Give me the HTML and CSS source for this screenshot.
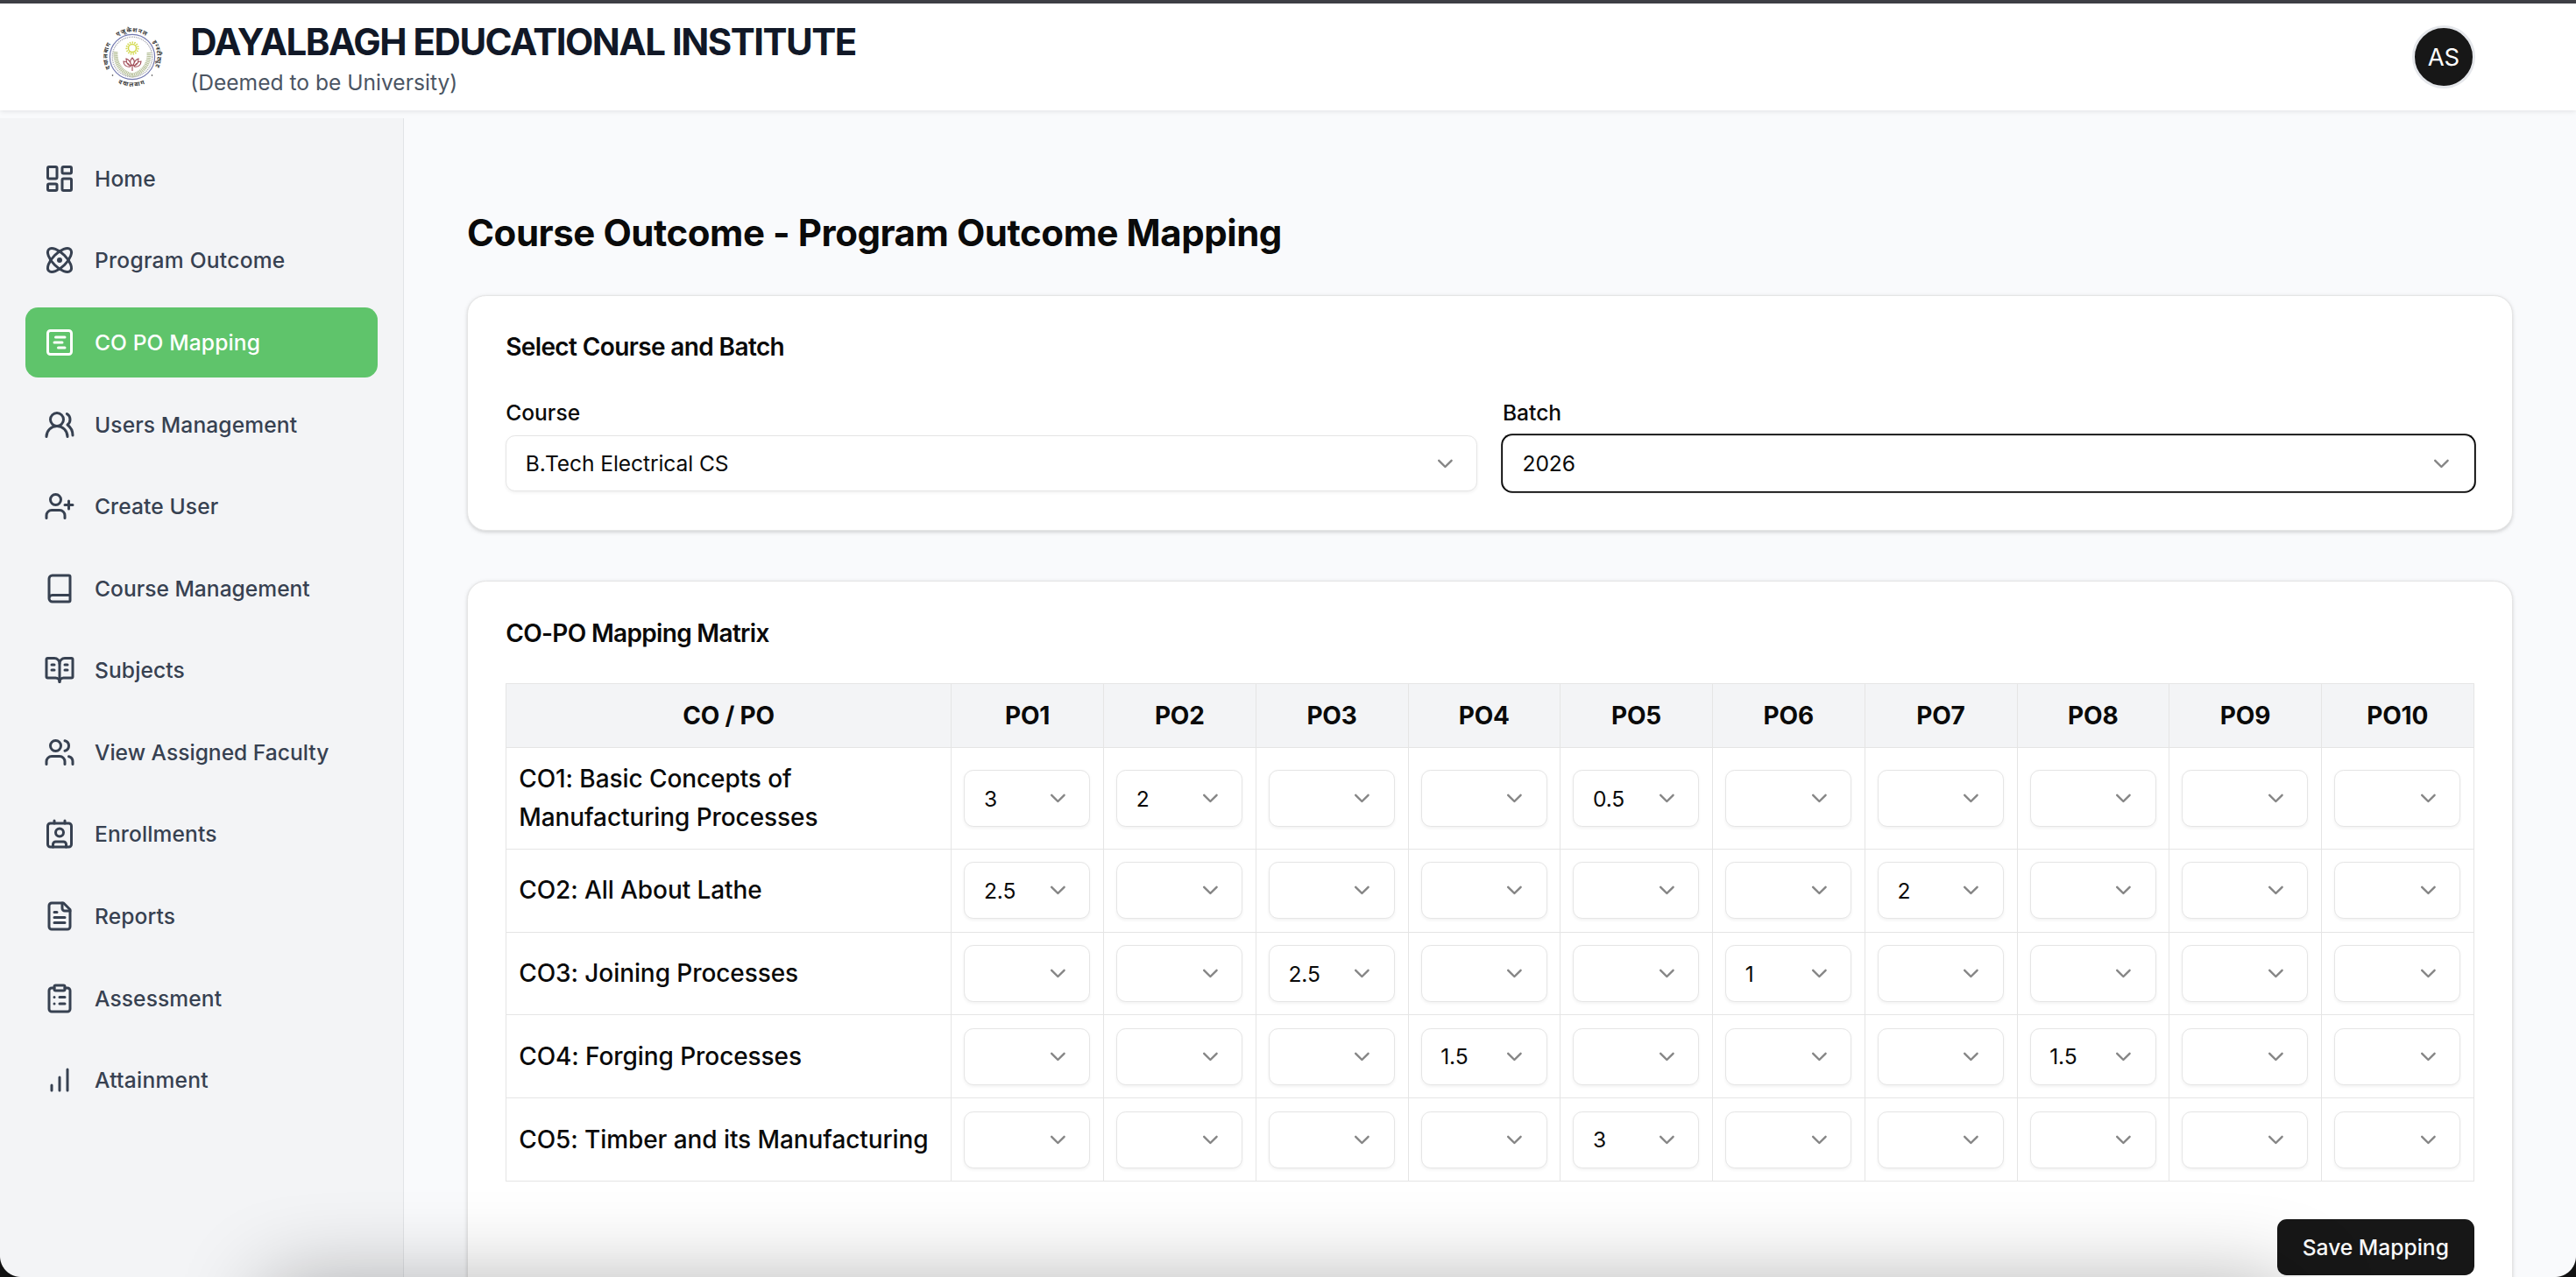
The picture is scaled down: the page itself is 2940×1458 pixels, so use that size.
FILE: index.html
```html
<!DOCTYPE html>
<html lang="en">
<head>
<meta charset="utf-8">
<title>CO PO Mapping</title>
<link rel="stylesheet" href="styles.css">
</head>
<body>
<header class="topbar">
  <div class="brand">
    <svg class="logo" viewBox="0 0 72 72">
      <defs>
        <path id="arc-top" d="M7.5 36a28.5 28.5 0 0 1 57 0a28.5 28.5 0 0 1-57 0"/>
        <path id="arc-left" d="M36 64.5a28.5 28.5 0 0 1 0-57a28.5 28.5 0 0 1 0 57"/>
        <path id="arc-bottom" d="M2.3 36a33.7 33.7 0 0 0 67.4 0"/>
      </defs>
      <circle cx="36" cy="36" r="25.6" fill="none" stroke="#7379b0" stroke-width="1.200"/>
      <circle cx="36" cy="36" r="22.800" fill="none" stroke="#a5a5b0" stroke-width="1.300" stroke-dasharray="1 .8" pathLength="120"/>
      <path d="M17 30c-1 13 6 24 19 27c13-3 20-14 19-27" fill="none" stroke="#b9c29d" stroke-width="5" stroke-dasharray="1.300 .7"/>
      <circle cx="36" cy="26" r="4.500" fill="#fff" stroke="#d2d84a" stroke-width="1.500"/>
      <circle cx="36" cy="26" r="6.600" fill="none" stroke="#d2d84a" stroke-width="2" stroke-dasharray="1.400 1.370"/>
      <path fill="none" stroke="#a04a55" stroke-width="1.100" d="M36 52v-7M36 46c-3-3-3-6 0-9c3 3 3 6 0 9M35 46c-5 0-6-4-6-8c3 1 5 4 6 8M37 46c5 0 6-4 6-8c-3 1-5 4-6 8M34 47c-5 1-8-2-8-6c3 0 6 3 8 6M38 47c5 1 8-2 8-6c-3 0-6 3-8 6"/>
      <circle cx="13.500" cy="57" r=".8" fill="#333"/>
      <circle cx="58.500" cy="57" r=".8" fill="#333"/>
      <g class="logo-text">
        <text><textPath href="#arc-top" startOffset="27">एजूकेशनल</textPath></text>
        <text><textPath href="#arc-top" startOffset="71">इन्स्टीट्यूट</textPath></text>
        <text><textPath href="#arc-left" startOffset="31">दयालबाग</textPath></text>
        <text class="logo-text-wide"><textPath href="#arc-bottom" startOffset="36">दयालबाग</textPath></text>
      </g>
    </svg>
    <div class="brand-text">
      <div class="brand-name">DAYALBAGH EDUCATIONAL INSTITUTE</div>
      <div class="brand-sub">(Deemed to be University)</div>
    </div>
  </div>
  <div class="avatar">AS</div>
</header>
<div class="layout">
  <nav class="sidebar">
    <a class="nav-item"><svg class="icon" viewBox="0 0 24 24"><rect width="7" height="9" x="3" y="3" rx="1"/><rect width="7" height="5" x="14" y="3" rx="1"/><rect width="7" height="9" x="14" y="12" rx="1"/><rect width="7" height="5" x="3" y="16" rx="1"/></svg><span>Home</span></a>
    <a class="nav-item"><svg class="icon" viewBox="0 0 24 24"><circle cx="12" cy="12" r="1"/><path d="M20.200 20.200c2.040-2.030.020-7.360-4.500-11.900-4.540-4.520-9.870-6.540-11.900-4.500-2.040 2.030-.020 7.360 4.500 11.900 4.540 4.520 9.870 6.540 11.900 4.500Z"/><path d="M15.700 15.700c4.520-4.540 6.540-9.870 4.500-11.900-2.030-2.040-7.360-.020-11.900 4.500-4.520 4.540-6.540 9.870-4.500 11.900 2.030 2.040 7.360.020 11.900-4.500Z"/></svg><span class="nav-wide">Program Outcome</span></a>
    <a class="nav-item active"><svg class="icon" viewBox="0 0 24 24"><rect width="18" height="18" x="3" y="3" rx="2"/><path d="M9 8h7M8 12h6M11 16h5"/></svg><span>CO PO Mapping</span></a>
    <a class="nav-item"><svg class="icon" viewBox="0 0 24 24"><path d="M18 21a8 8 0 0 0-16 0"/><circle cx="10" cy="8" r="5"/><path d="M22 20c0-3.370-2-6.500-4-8a5 5 0 0 0-.450-8.300"/></svg><span>Users Management</span></a>
    <a class="nav-item"><svg class="icon" viewBox="0 0 24 24"><path d="M16 21v-2a4 4 0 0 0-4-4H6a4 4 0 0 0-4 4v2"/><circle cx="9" cy="7" r="4"/><path d="M19 8v6M22 11h-6"/></svg><span>Create User</span></a>
    <a class="nav-item"><svg class="icon" viewBox="0 0 24 24"><path d="M4 19.500v-15A2.500 2.500 0 0 1 6.500 2H19a1 1 0 0 1 1 1v18a1 1 0 0 1-1 1H6.500a1 1 0 0 1 0-5H20"/></svg><span class="nav-tight">Course Management</span></a>
    <a class="nav-item"><svg class="icon" viewBox="0 0 24 24"><path d="M12 7v14M16 12h2M16 8h2M6 12h2M6 8h2"/><path d="M3 18a1 1 0 0 1-1-1V4a1 1 0 0 1 1-1h5a4 4 0 0 1 4 4 4 4 0 0 1 4-4h5a1 1 0 0 1 1 1v13a1 1 0 0 1-1 1h-6a3 3 0 0 0-3 3 3 3 0 0 0-3-3z"/></svg><span>Subjects</span></a>
    <a class="nav-item"><svg class="icon" viewBox="0 0 24 24"><path d="M16 21v-2a4 4 0 0 0-4-4H6a4 4 0 0 0-4 4v2"/><circle cx="9" cy="7" r="4"/><path d="M22 21v-2a4 4 0 0 0-3-3.870M16 3.130a4 4 0 0 1 0 7.750"/></svg><span class="nav-tight">View Assigned Faculty</span></a>
    <a class="nav-item"><svg class="icon" viewBox="0 0 24 24"><path d="M16 2v2M7 22v-2a2 2 0 0 1 2-2h6a2 2 0 0 1 2 2v2M8 2v2"/><circle cx="12" cy="11" r="3"/><rect x="3" y="4" width="18" height="18" rx="2"/></svg><span>Enrollments</span></a>
    <a class="nav-item"><svg class="icon" viewBox="0 0 24 24"><path d="M15 2H6a2 2 0 0 0-2 2v16a2 2 0 0 0 2 2h12a2 2 0 0 0 2-2V7Z"/><path d="M14 2v4a2 2 0 0 0 2 2h4M10 9H8M16 13H8M16 17H8"/></svg><span>Reports</span></a>
    <a class="nav-item"><svg class="icon" viewBox="0 0 24 24"><rect width="8" height="4" x="8" y="2" rx="1"/><path d="M16 4h2a2 2 0 0 1 2 2v14a2 2 0 0 1-2 2H6a2 2 0 0 1-2-2V6a2 2 0 0 1 2-2h2M12 11h4M12 16h4M8 11h.010M8 16h.010"/></svg><span>Assessment</span></a>
    <a class="nav-item"><svg class="icon" viewBox="0 0 24 24"><path d="M12 20V10M18 20V4M6 20v-4"/></svg><span class="nav-wide">Attainment</span></a>
  </nav>
  <main class="content">
    <h1 class="page-title">Course Outcome - Program Outcome Mapping</h1>
    <section class="card">
      <h2 class="card-title">Select Course and Batch</h2>
      <div class="fields">
        <div class="field">
          <label class="label">Course</label>
          <div class="select"><span>B.Tech Electrical CS</span><svg class="chevron" viewBox="0 0 24 24"><path d="m6 9 6 6 6-6"/></svg></div>
        </div>
        <div class="field">
          <label class="label">Batch</label>
          <div class="select focused"><span>2026</span><svg class="chevron" viewBox="0 0 24 24"><path d="m6 9 6 6 6-6"/></svg></div>
        </div>
      </div>
    </section>
    <section class="card matrix-card">
      <h2 class="card-title">CO-PO Mapping Matrix</h2>
      <div class="matrix" id="matrix"></div>
      <div class="actions"><button class="save">Save Mapping</button></div>
    </section>
  </main>
</div>
<div class="bottom-shade"></div>
<div class="corner corner-left"></div>
<div class="corner corner-right"></div>
<script src="matrix.js"></script>
</body>
</html>
```
FILE: styles.css
```css
* { box-sizing: border-box; }
html, body { height: 100%; overflow: hidden; }
body {
  margin: 0;
  position: relative;
  display: flex;
  flex-direction: column;
  background: #f9fafc;
  color: #0a0a0a;
  font-family: Inter, "Liberation Sans", sans-serif;
  font-size: 24.6px;
}
.topbar {
  flex: none;
  height: 126px;
  border-top: 4px solid #3e3f45;
  background: #fff;
  box-shadow: 0 1.800px 5px rgba(0, 0, 0, .09);
  padding: 0 115.200px;
  display: flex;
  align-items: center;
  justify-content: space-between;
}
.brand { display: flex; align-items: center; gap: 30px; }
.logo { width: 72px; height: 72px; overflow: visible; }
.logo-text { font: 700 6.800px "Noto Sans", sans-serif; letter-spacing: .9px; fill: #333; }
.logo-text-wide { letter-spacing: 1.500px; }
.brand-text { padding-top: 3px; }
.brand-name {
  font-size: 42px;
  line-height: 50px;
  font-weight: 700;
  letter-spacing: -1.500px;
  color: #111827;
}
.brand-sub { line-height: 36px; margin-top: 2px; padding-top: 1px; margin-bottom: -1px; color: #4b5563; }
.avatar {
  width: 72px;
  height: 72px;
  border-radius: 50%;
  border: 3.600px solid #e5e7eb;
  background: #171717;
  color: #fff;
  font-size: 27.500px;
  letter-spacing: -.2px;
  display: flex;
  align-items: center;
  justify-content: center;
}
.layout { flex: 1; min-height: 0; display: flex; }
.sidebar {
  width: 461px;
  flex: none;
  margin-top: 9px;
  padding: 29.200px 28.800px;
  background: #f3f4f6;
  border-right: 1px solid #e2e4e7;
  display: flex;
  flex-direction: column;
  gap: 14.400px;
  overflow: hidden;
}
.nav-item {
  height: 79.200px;
  flex: none;
  padding: 0 21.600px;
  border-radius: 14.400px;
  display: flex;
  align-items: center;
  gap: 21.600px;
  font-weight: 500;
  letter-spacing: .1px;
  color: #374151;
  white-space: nowrap;
}
.nav-item.active { background: #5fc46b; color: #fff; }
.nav-wide { letter-spacing: .25px; }
.nav-tight { letter-spacing: 0; }
.icon {
  width: 36px;
  height: 36px;
  flex: none;
  fill: none;
  stroke: currentColor;
  stroke-width: 2;
  stroke-linecap: round;
  stroke-linejoin: round;
}
.content { flex: 1; min-width: 0; padding: 115px 72px 0; overflow: hidden; }
.page-title { margin: 0 0 46px; font-size: 42px; line-height: 50px; font-weight: 700; letter-spacing: -.450px; }
.card {
  height: 269px;
  padding: 43.200px;
  background: #fff;
  border: 1px solid #e5e5e5;
  border-radius: 21.600px;
  box-shadow: 0 1.800px 5px rgba(0, 0, 0, .1), 0 1.800px 3px rgba(0, 0, 0, .06);
}
.matrix-card { margin-top: 57.400px; height: auto; }
.card-title { margin: 0; font-size: 28px; line-height: 30px; font-weight: 600; letter-spacing: -.620px; }
.matrix-card .card-title { letter-spacing: -.680px; }
.fields { margin-top: 42px; display: grid; grid-template-columns: 1fr 1fr; gap: 28.800px; }
.label { display: block; line-height: 36px; font-weight: 500; margin-bottom: 7.500px; }
.select {
  height: 64.800px;
  padding: 0 21.600px;
  border: 1px solid #e5e5e5;
  border-radius: 10.800px;
  background: #fff;
  box-shadow: 0 1.800px 3.600px rgba(0, 0, 0, .05);
  letter-spacing: -.1px;
  display: flex;
  align-items: center;
  justify-content: space-between;
}
.select.focused { box-shadow: 0 0 0 1.800px #0a0a0a; }
.chevron {
  width: 28.800px;
  height: 28.800px;
  flex: none;
  fill: none;
  stroke: #858585;
  stroke-width: 2;
  stroke-linecap: round;
  stroke-linejoin: round;
}
.matrix {
  margin-top: 42px;
  display: grid;
  grid-template-columns: 508.200px repeat(10, 1fr);
  grid-template-rows: 73.600px 115.700px repeat(4, 94.800px);
  border: solid #e5e5e5;
  border-width: 1px 0 0 1px;
}
.cell {
  padding: 0 14.400px 0 14px;
  border: solid #e5e5e5;
  border-width: 0 1px 1px 0;
  display: flex;
  align-items: center;
}
.cell.head { background: #f3f4f6; justify-content: center; font-weight: 700; font-size: 28px; letter-spacing: -.2px; }
.cell.name { font-weight: 500; font-size: 28px; line-height: 43.200px; letter-spacing: -.080px; }
.cell .select { width: 144px; }
.actions { margin-top: 43px; display: flex; justify-content: flex-end; }
.save {
  width: 225px;
  height: 64px;
  border: 0;
  border-radius: 10.800px;
  background: #171717;
  color: #fafafa;
  font: 500 24.600px Inter, sans-serif;
  padding: 0;
}
.bottom-shade {
  position: absolute;
  left: 305px;
  right: 325px;
  top: 1466px;
  height: 120px;
  box-shadow: 0 0 100px 0 rgba(0, 0, 0, .32);
}
.corner { position: absolute; bottom: 0; width: 24px; height: 24px; }
.corner-left { left: 0; background: radial-gradient(circle at 24px 0, transparent 23.500px, #111 24.500px); }
.corner-right { right: 0; background: radial-gradient(circle at 0 0, transparent 23.500px, #111 24.500px); }
```
FILE: matrix.js
```js
const rows = [
  ["CO1: Basic Concepts of Manufacturing Processes", { 1: "3", 2: "2", 5: "0.5" }],
  ["CO2: All About Lathe", { 1: "2.5", 7: "2" }],
  ["CO3: Joining Processes", { 3: "2.5", 6: "1" }],
  ["CO4: Forging Processes", { 4: "1.5", 8: "1.5" }],
  ["CO5: Timber and its Manufacturing", { 5: "3" }],
];
const chevron = '<svg class="chevron" viewBox="0 0 24 24"><path d="m6 9 6 6 6-6"/></svg>';
let html = '<div class="cell head">CO / PO</div>';
for (let i = 1; i <= 10; i++) html += `<div class="cell head">PO${i}</div>`;
for (const [name, marks] of rows) {
  html += `<div class="cell name">${name}</div>`;
  for (let i = 1; i <= 10; i++) {
    html += `<div class="cell"><div class="select"><span>${marks[i] || ""}</span>${chevron}</div></div>`;
  }
}
document.getElementById("matrix").innerHTML = html;
```
